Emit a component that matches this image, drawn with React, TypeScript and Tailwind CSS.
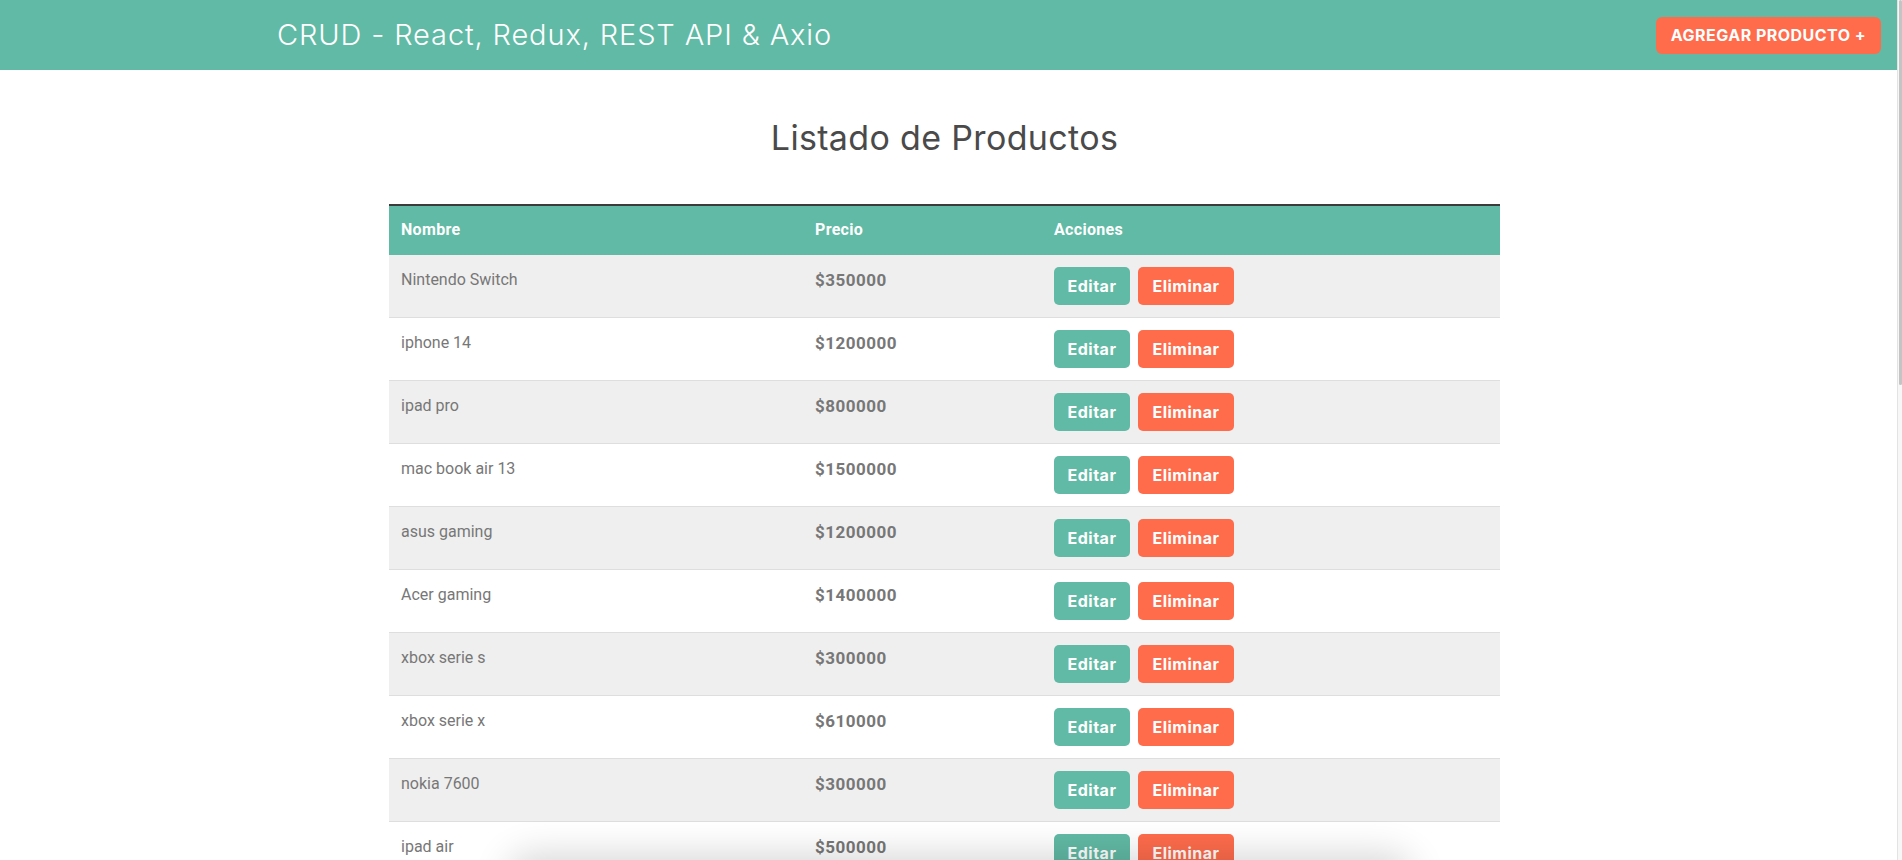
const productos = [
  { nombre: "Nintendo Switch", precio: 350000 },
  { nombre: "iphone 14", precio: 1200000 },
  { nombre: "ipad pro", precio: 800000 },
  { nombre: "mac book air 13", precio: 1500000 },
  { nombre: "asus gaming", precio: 1200000 },
  { nombre: "Acer gaming", precio: 1400000 },
  { nombre: "xbox serie s", precio: 300000 },
  { nombre: "xbox serie x", precio: 610000 },
  { nombre: "nokia 7600", precio: 300000 },
  { nombre: "ipad air", precio: 500000 },
  { nombre: "samsung s23", precio: 900000 },
];

function Header() {
  return (
    <header className="flex h-[70px] items-center justify-between bg-[#61baa5] pl-[277px] pr-4">
      <h1 className="font-['Inter',sans-serif] text-[29px] font-light tracking-[0.03em] text-white">
        CRUD - React, Redux, REST API &amp; Axio
      </h1>
      <a
        href="#nuevo"
        className="flex h-[37px] w-[225px] items-center justify-center rounded-[6px] bg-[#ff6c4c] font-['Inter',sans-serif] text-[16px] font-bold uppercase tracking-[0.03em] text-white"
      >
        Agregar Producto +
      </a>
    </header>
  );
}

function Producto({ nombre, precio, index }: { nombre: string; precio: number; index: number }) {
  return (
    <tr className={`border-b border-[#dedede] ${index % 2 === 0 ? "bg-[#efefef]" : "bg-white"}`}>
      <td className="px-3 pt-[13px] pb-3 align-top text-[#777]">{nombre}</td>
      <td className="px-3 pt-[13px] pb-3 align-top text-[17px] font-bold tracking-[0.03em] text-[#777]">
        ${precio}
      </td>
      <td className="px-3 pt-3 pb-3 align-top">
        <div className="flex gap-2 font-['Inter',sans-serif] text-[16px] font-bold tracking-[0.03em] text-white">
          <button className="flex h-[38px] w-[76px] items-center justify-center rounded-[5px] bg-[#61baa5]">
            Editar
          </button>
          <button className="flex h-[38px] w-[96px] items-center justify-center rounded-[5px] bg-[#ff6c4c]">
            Eliminar
          </button>
        </div>
      </td>
    </tr>
  );
}

export default function App() {
  return (
    <div className="relative flex h-[860px] overflow-hidden bg-white">
      <div className="min-w-0 flex-1">
        <Header />
        <main className="pl-[389px]">
          <div className="w-[1111px]">
            <h2 className="mt-[42px] text-center font-['Inter',sans-serif] text-[34px] font-normal tracking-[0.01em] text-[#4a4a4a]">
              Listado de Productos
            </h2>
            <table className="mt-[41px] w-full table-fixed border-collapse font-['Roboto',sans-serif] text-base leading-6">
              <thead>
                <tr className="border-t-2 border-[#3b3b3b] bg-[#61baa5] text-left tracking-[0.02em] text-white">
                  <th className="w-[414px] px-3 pt-3 pb-[13px] font-bold">Nombre</th>
                  <th className="w-[239px] px-3 pt-3 pb-[13px] font-bold">Precio</th>
                  <th className="px-3 pt-3 pb-[13px] font-bold">Acciones</th>
                </tr>
              </thead>
              <tbody>
                {productos.map((p, i) => (
                  <Producto key={p.nombre} nombre={p.nombre} precio={p.precio} index={i} />
                ))}
              </tbody>
            </table>
          </div>
        </main>
      </div>
      <div className="w-[5px] border-l border-[#e3e3e3] bg-[#f7f7f7]">
        <div className="ml-auto h-[385px] w-[3px] rounded-full bg-[#c4c4c4]" />
      </div>
      <div className="absolute left-[520px] top-[866px] h-[60px] w-[880px] rounded-xl bg-white shadow-[0_0_36px_12px_rgba(0,0,0,0.16)]" />
    </div>
  );
}
